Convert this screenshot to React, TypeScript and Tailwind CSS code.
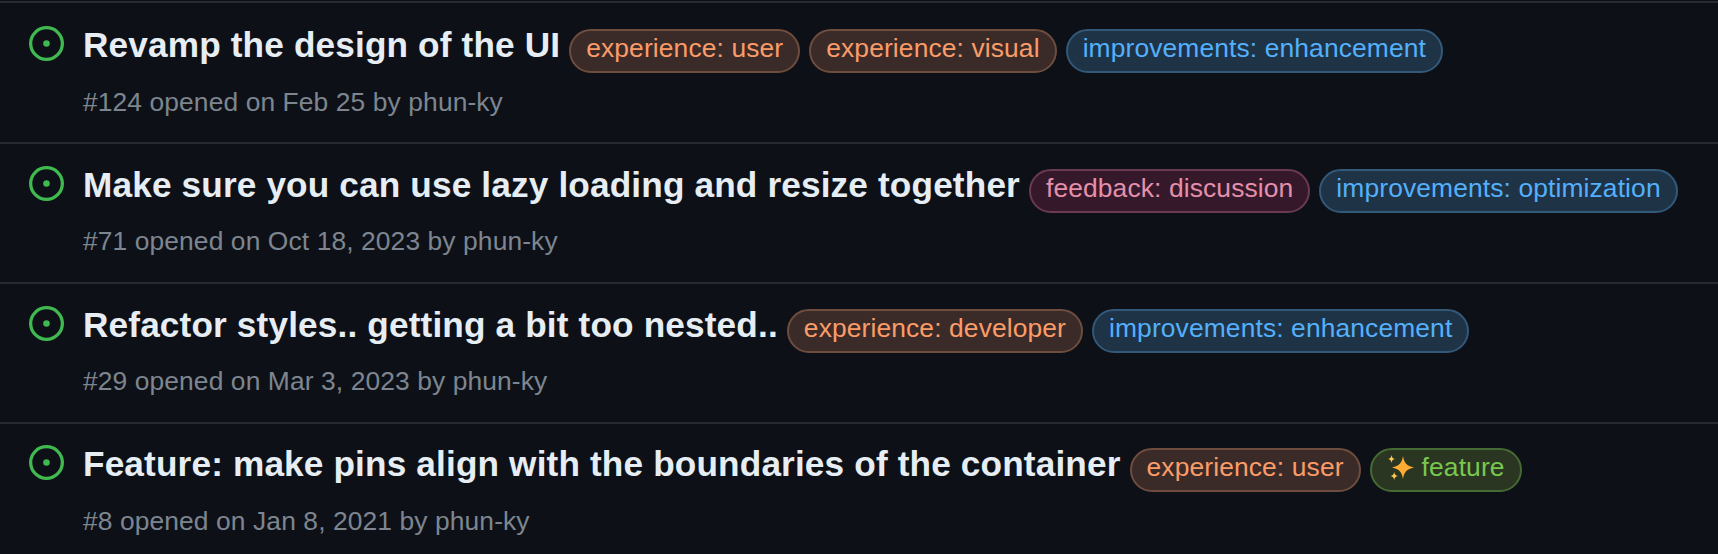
import type { FC } from "react";

type LabelKind = "orange" | "blue" | "pink" | "green";

interface Issue {
  title: string;
  meta: string;
  labels: { text: string; kind: LabelKind; sparkle?: boolean }[];
}

const labelStyles: Record<LabelKind, string> = {
  orange: "bg-[#3b2b28] border-[#6e4d3e] text-[#fb9c68]",
  blue: "bg-[#1f3347] border-[#32597a] text-[#54b0fb]",
  pink: "bg-[#35192b] border-[#6a3a51] text-[#e58fab]",
  green: "bg-[#2a3622] border-[#456b33] text-[#7ac74f]",
};

const issues: Issue[] = [
  {
    title: "Revamp the design of the UI",
    meta: "#124 opened on Feb 25 by phun-ky",
    labels: [
      { text: "experience: user", kind: "orange" },
      { text: "experience: visual", kind: "orange" },
      { text: "improvements: enhancement", kind: "blue" },
    ],
  },
  {
    title: "Make sure you can use lazy loading and resize together",
    meta: "#71 opened on Oct 18, 2023 by phun-ky",
    labels: [
      { text: "feedback: discussion", kind: "pink" },
      { text: "improvements: optimization", kind: "blue" },
    ],
  },
  {
    title: "Refactor styles.. getting a bit too nested..",
    meta: "#29 opened on Mar 3, 2023 by phun-ky",
    labels: [
      { text: "experience: developer", kind: "orange" },
      { text: "improvements: enhancement", kind: "blue" },
    ],
  },
  {
    title: "Feature: make pins align with the boundaries of the container",
    meta: "#8 opened on Jan 8, 2021 by phun-ky",
    labels: [
      { text: "experience: user", kind: "orange" },
      { text: "feature", kind: "green", sparkle: true },
    ],
  },
];

const IssueOpenedIcon = () => (
  <svg viewBox="0 0 16 16" className="w-[35px] h-[35px] shrink-0 fill-[#3fb950]">
    <path d="M8 9.5a1.5 1.5 0 1 0 0-3 1.5 1.5 0 0 0 0 3Z" />
    <path d="M8 0a8 8 0 1 1 0 16A8 8 0 0 1 8 0ZM1.5 8a6.5 6.5 0 1 0 13 0 6.5 6.5 0 0 0-13 0Z" />
  </svg>
);

const Sparkles = () => (
  <svg viewBox="0 0 26 26" className="w-[26px] h-[26px] ml-px mr-[8px] shrink-0">
    <path d="M15 1c1.200 7 3.500 10 11 11.500C18.500 14 16.200 17 15 24c-1.200-7-3.500-10-11-11.500C11.500 11 13.800 8 15 1Z" fill="#ffac33" />
    <path d="M3.500 0c.4 2.500 1 3.500 3.500 4-2.500.5-3.100 1.500-3.500 4C3.100 5.500 2.500 4.500 0 4c2.500-.5 3.100-1.500 3.500-4Z" fill="#ffcc4d" />
    <path d="M6.200 17c.4 2.500 1.200 3.500 3.800 4-2.600.5-3.400 1.500-3.800 4-.4-2.500-1.200-3.500-3.800-4 2.600-.5 3.400-1.500 3.800-4Z" fill="#ffcc4d" />
  </svg>
);

const IssueRow: FC<{ issue: Issue }> = ({ issue }) => (
  <div className="group h-[140px] first:h-[141px] first:pt-px last:[&>*]:-mt-px border-t-2 border-[#262b33] flex flex-row items-start pl-[29px]">
    <div className="pt-[22px]">
      <IssueOpenedIcon />
    </div>
    <div className="ml-[19px] flex flex-col">
      <div className="flex flex-row items-start gap-[9px] pt-[19px]">
        <span className="text-[35.2px] leading-[44px] font-bold tracking-[0.15px] text-[#e6edf3]">{issue.title}</span>
        {issue.labels.map((label) => (
          <span
            key={label.text}
            className={`flex items-center h-[44px] mt-[6px] pb-[4px] px-[15px] rounded-full border-2 text-[26.4px] tracking-[0.12px] ${labelStyles[label.kind]}`}
          >
            {label.sparkle && <Sparkles />}
            {label.text}
          </span>
        ))}
      </div>
      <div className="mt-[10px] group-first:mt-[11px] group-last:mt-[11px] text-[26.4px] leading-[36px] tracking-[0.1px] text-[#7d8590]">{issue.meta}</div>
    </div>
  </div>
);

export default function App() {
  return (
    <div className="w-[1718px] h-[554px] overflow-hidden bg-[#0d1117] pt-px font-['Liberation_Sans',Arial,sans-serif]">
      {issues.map((issue) => (
        <IssueRow key={issue.meta} issue={issue} />
      ))}
    </div>
  );
}
